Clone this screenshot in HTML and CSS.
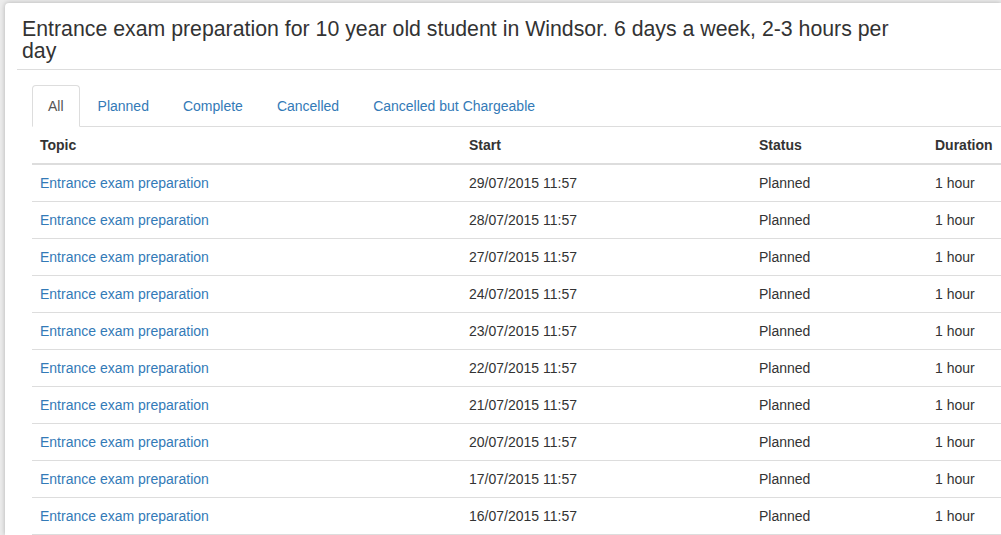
FILE: index.html
```html
<!DOCTYPE html>
<html>
<head>
<meta charset="utf-8">
<link rel="stylesheet" href="styles.css">
</head>
<body>
<div class="page">
  <div class="panel">
    <div class="panel-head">
      <h3 class="title">Entrance exam preparation for 10 year old student in Windsor. 6 days a week, 2-3 hours per day</h3>
    </div>
    <div class="panel-body">
      <ul class="tabs">
        <li class="tab active"><a href="#">All</a></li>
        <li class="tab"><a href="#">Planned</a></li>
        <li class="tab"><a href="#">Complete</a></li>
        <li class="tab"><a href="#">Cancelled</a></li>
        <li class="tab"><a href="#">Cancelled but Chargeable</a></li>
      </ul>
      <table class="lessons">
        <colgroup>
          <col class="c-topic"><col class="c-start"><col class="c-status"><col class="c-dur">
        </colgroup>
        <thead>
          <tr><th>Topic</th><th>Start</th><th>Status</th><th>Duration</th></tr>
        </thead>
        <tbody>
          <tr><td><a href="#">Entrance exam preparation</a></td><td>29/07/2015 11:57</td><td>Planned</td><td>1 hour</td></tr>
          <tr><td><a href="#">Entrance exam preparation</a></td><td>28/07/2015 11:57</td><td>Planned</td><td>1 hour</td></tr>
          <tr><td><a href="#">Entrance exam preparation</a></td><td>27/07/2015 11:57</td><td>Planned</td><td>1 hour</td></tr>
          <tr><td><a href="#">Entrance exam preparation</a></td><td>24/07/2015 11:57</td><td>Planned</td><td>1 hour</td></tr>
          <tr><td><a href="#">Entrance exam preparation</a></td><td>23/07/2015 11:57</td><td>Planned</td><td>1 hour</td></tr>
          <tr><td><a href="#">Entrance exam preparation</a></td><td>22/07/2015 11:57</td><td>Planned</td><td>1 hour</td></tr>
          <tr><td><a href="#">Entrance exam preparation</a></td><td>21/07/2015 11:57</td><td>Planned</td><td>1 hour</td></tr>
          <tr><td><a href="#">Entrance exam preparation</a></td><td>20/07/2015 11:57</td><td>Planned</td><td>1 hour</td></tr>
          <tr><td><a href="#">Entrance exam preparation</a></td><td>17/07/2015 11:57</td><td>Planned</td><td>1 hour</td></tr>
          <tr><td><a href="#">Entrance exam preparation</a></td><td>16/07/2015 11:57</td><td>Planned</td><td>1 hour</td></tr>
        </tbody>
      </table>
    </div>
  </div>
</div>
</body>
</html>
```

FILE: styles.css
```css
* { box-sizing: border-box; }
html, body {
  margin: 0;
  padding: 0;
  background: #ececec;
  overflow: hidden;
  height: 535px;
}
body {
  font-family: "Liberation Sans", Arial, sans-serif;
  font-size: 14px;
  line-height: 20px;
  color: #333;
}
a { color: #337ab7; text-decoration: none; }
.page {
  padding: 3px 0 0 5px;
  width: 1001px;
}
.panel {
  background: #fff;
  border-radius: 4px 0 0 0;
  box-shadow: 0 0 5px rgba(0, 0, 0, 0.25);
  width: 996px;
  height: 532px;
}
.panel-head {
  margin-left: 12px;
  padding: 15px 0 7px 5px;
  border-bottom: 1px solid #ddd;
}
.title {
  margin: 0;
  max-width: 900px;
  font-size: 21.3px;
  font-weight: normal;
  line-height: 22px;
  color: #333;
}
.panel-body {
  margin-left: 12px;
  padding: 15px 0 0 15px;
}
.tabs {
  list-style: none;
  margin: 0;
  padding: 0;
  display: flex;
  border-bottom: 1px solid #ddd;
}
.tab {
  margin-right: 2px;
  margin-bottom: -1px;
}
.tab a {
  display: block;
  padding: 10px 15px;
  line-height: 20px;
  border: 1px solid transparent;
  border-radius: 4px 4px 0 0;
}
.tab.active a {
  color: #555;
  background: #fff;
  border-color: #ddd #ddd transparent;
}
.lessons {
  border-collapse: collapse;
  border-spacing: 0;
  table-layout: fixed;
  width: 969px;
}
.c-topic { width: 429px; }
.c-start { width: 290px; }
.c-status { width: 176px; }
.c-dur { width: 74px; }
.lessons th, .lessons td {
  padding: 8px;
  line-height: 20px;
  text-align: left;
  vertical-align: top;
  white-space: nowrap;
}
.lessons th {
  font-weight: bold;
  border-bottom: 2px solid #ddd;
}
.lessons td {
  border-top: 1px solid #ddd;
}
.lessons tbody tr:first-child td { border-top: 0; }
.lessons tbody tr:last-child td { border-bottom: 1px solid #ddd; }
```
